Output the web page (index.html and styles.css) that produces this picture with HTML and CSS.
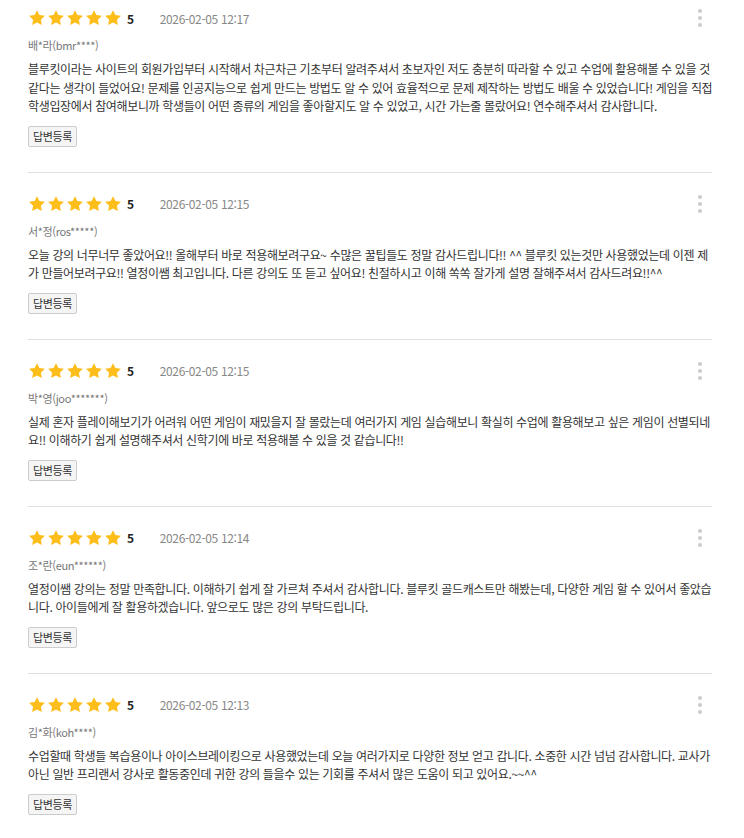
FILE: index.html
```html
<!DOCTYPE html>
<html lang="ko">
<head>
<meta charset="utf-8">
<link rel="stylesheet" href="styles.css">
</head>
<body>
<div class="list">
  <div class="review">
    <div class="head">
      <div class="stars">
        <svg viewBox="0 0 24 24"><path d="M12 1.5l3.2 6.6 7.3 1-5.3 5.1 1.3 7.2L12 17.9l-6.5 3.5 1.3-7.2-5.3-5.1 7.3-1z"/></svg>
        <svg viewBox="0 0 24 24"><path d="M12 1.5l3.2 6.6 7.3 1-5.3 5.1 1.3 7.2L12 17.9l-6.5 3.5 1.3-7.2-5.3-5.1 7.3-1z"/></svg>
        <svg viewBox="0 0 24 24"><path d="M12 1.5l3.2 6.6 7.3 1-5.3 5.1 1.3 7.2L12 17.9l-6.5 3.5 1.3-7.2-5.3-5.1 7.3-1z"/></svg>
        <svg viewBox="0 0 24 24"><path d="M12 1.5l3.2 6.6 7.3 1-5.3 5.1 1.3 7.2L12 17.9l-6.5 3.5 1.3-7.2-5.3-5.1 7.3-1z"/></svg>
        <svg viewBox="0 0 24 24"><path d="M12 1.5l3.2 6.6 7.3 1-5.3 5.1 1.3 7.2L12 17.9l-6.5 3.5 1.3-7.2-5.3-5.1 7.3-1z"/></svg>
      </div>
      <span class="score">5</span>
      <span class="date">2026-02-05 12:17</span>
      <span class="more"><i></i><i></i><i></i></span>
    </div>
    <div class="name">배*라(bmr****)</div>
    <p class="body">블루킷이라는 사이트의 회원가입부터 시작해서 차근차근 기초부터 알려주셔서 초보자인 저도 충분히 따라할 수 있고 수업에 활용해볼 수 있을 것 같다는 생각이 들었어요! 문제를 인공지능으로 쉽게 만드는 방법도 알 수 있어 효율적으로 문제 제작하는 방법도 배울 수 있었습니다! 게임을 직접 학생입장에서 참여해보니까 학생들이 어떤 종류의 게임을 좋아할지도 알 수 있었고, 시간 가는줄 몰랐어요! 연수해주셔서 감사합니다.</p>
    <button class="reply">답변등록</button>
  </div>

  <div class="review">
    <div class="head">
      <div class="stars">
        <svg viewBox="0 0 24 24"><path d="M12 1.5l3.2 6.6 7.3 1-5.3 5.1 1.3 7.2L12 17.9l-6.5 3.5 1.3-7.2-5.3-5.1 7.3-1z"/></svg>
        <svg viewBox="0 0 24 24"><path d="M12 1.5l3.2 6.6 7.3 1-5.3 5.1 1.3 7.2L12 17.9l-6.5 3.5 1.3-7.2-5.3-5.1 7.3-1z"/></svg>
        <svg viewBox="0 0 24 24"><path d="M12 1.5l3.2 6.6 7.3 1-5.3 5.1 1.3 7.2L12 17.9l-6.5 3.5 1.3-7.2-5.3-5.1 7.3-1z"/></svg>
        <svg viewBox="0 0 24 24"><path d="M12 1.5l3.2 6.6 7.3 1-5.3 5.1 1.3 7.2L12 17.9l-6.5 3.5 1.3-7.2-5.3-5.1 7.3-1z"/></svg>
        <svg viewBox="0 0 24 24"><path d="M12 1.5l3.2 6.6 7.3 1-5.3 5.1 1.3 7.2L12 17.9l-6.5 3.5 1.3-7.2-5.3-5.1 7.3-1z"/></svg>
      </div>
      <span class="score">5</span>
      <span class="date">2026-02-05 12:15</span>
      <span class="more"><i></i><i></i><i></i></span>
    </div>
    <div class="name">서*정(ros*****)</div>
    <p class="body">오늘 강의 너무너무 좋았어요!! 올해부터 바로 적용해보려구요~ 수많은 꿀팁들도 정말 감사드립니다!! ^^ 블루킷 있는것만 사용했었는데 이젠 제가 만들어보려구요!! 열정이쌤 최고입니다. 다른 강의도 또 듣고 싶어요! 친절하시고 이해 쏙쏙 잘가게 설명 잘해주셔서 감사드려요!!^^</p>
    <button class="reply">답변등록</button>
  </div>

  <div class="review">
    <div class="head">
      <div class="stars">
        <svg viewBox="0 0 24 24"><path d="M12 1.5l3.2 6.6 7.3 1-5.3 5.1 1.3 7.2L12 17.9l-6.5 3.5 1.3-7.2-5.3-5.1 7.3-1z"/></svg>
        <svg viewBox="0 0 24 24"><path d="M12 1.5l3.2 6.6 7.3 1-5.3 5.1 1.3 7.2L12 17.9l-6.5 3.5 1.3-7.2-5.3-5.1 7.3-1z"/></svg>
        <svg viewBox="0 0 24 24"><path d="M12 1.5l3.2 6.6 7.3 1-5.3 5.1 1.3 7.2L12 17.9l-6.5 3.5 1.3-7.2-5.3-5.1 7.3-1z"/></svg>
        <svg viewBox="0 0 24 24"><path d="M12 1.5l3.2 6.6 7.3 1-5.3 5.1 1.3 7.2L12 17.9l-6.5 3.5 1.3-7.2-5.3-5.1 7.3-1z"/></svg>
        <svg viewBox="0 0 24 24"><path d="M12 1.5l3.2 6.6 7.3 1-5.3 5.1 1.3 7.2L12 17.9l-6.5 3.5 1.3-7.2-5.3-5.1 7.3-1z"/></svg>
      </div>
      <span class="score">5</span>
      <span class="date">2026-02-05 12:15</span>
      <span class="more"><i></i><i></i><i></i></span>
    </div>
    <div class="name">박*영(joo*******)</div>
    <p class="body">실제 혼자 플레이해보기가 어려워 어떤 게임이 재밌을지 잘 몰랐는데 여러가지 게임 실습해보니 확실히 수업에 활용해보고 싶은 게임이 선별되네요!! 이해하기 쉽게 설명해주셔서 신학기에 바로 적용해볼 수 있을 것 같습니다!!</p>
    <button class="reply">답변등록</button>
  </div>

  <div class="review">
    <div class="head">
      <div class="stars">
        <svg viewBox="0 0 24 24"><path d="M12 1.5l3.2 6.6 7.3 1-5.3 5.1 1.3 7.2L12 17.9l-6.5 3.5 1.3-7.2-5.3-5.1 7.3-1z"/></svg>
        <svg viewBox="0 0 24 24"><path d="M12 1.5l3.2 6.6 7.3 1-5.3 5.1 1.3 7.2L12 17.9l-6.5 3.5 1.3-7.2-5.3-5.1 7.3-1z"/></svg>
        <svg viewBox="0 0 24 24"><path d="M12 1.5l3.2 6.6 7.3 1-5.3 5.1 1.3 7.2L12 17.9l-6.5 3.5 1.3-7.2-5.3-5.1 7.3-1z"/></svg>
        <svg viewBox="0 0 24 24"><path d="M12 1.5l3.2 6.6 7.3 1-5.3 5.1 1.3 7.2L12 17.9l-6.5 3.5 1.3-7.2-5.3-5.1 7.3-1z"/></svg>
        <svg viewBox="0 0 24 24"><path d="M12 1.5l3.2 6.6 7.3 1-5.3 5.1 1.3 7.2L12 17.9l-6.5 3.5 1.3-7.2-5.3-5.1 7.3-1z"/></svg>
      </div>
      <span class="score">5</span>
      <span class="date">2026-02-05 12:14</span>
      <span class="more"><i></i><i></i><i></i></span>
    </div>
    <div class="name">조*란(eun******)</div>
    <p class="body">열정이쌤 강의는 정말 만족합니다. 이해하기 쉽게 잘 가르쳐 주셔서 감사합니다. 블루킷 골드캐스트만 해봤는데, 다양한 게임 할 수 있어서 좋았습니다. 아이들에게 잘 활용하겠습니다. 앞으로도 많은 강의 부탁드립니다.</p>
    <button class="reply">답변등록</button>
  </div>

  <div class="review">
    <div class="head">
      <div class="stars">
        <svg viewBox="0 0 24 24"><path d="M12 1.5l3.2 6.6 7.3 1-5.3 5.1 1.3 7.2L12 17.9l-6.5 3.5 1.3-7.2-5.3-5.1 7.3-1z"/></svg>
        <svg viewBox="0 0 24 24"><path d="M12 1.5l3.2 6.6 7.3 1-5.3 5.1 1.3 7.2L12 17.9l-6.5 3.5 1.3-7.2-5.3-5.1 7.3-1z"/></svg>
        <svg viewBox="0 0 24 24"><path d="M12 1.5l3.2 6.6 7.3 1-5.3 5.1 1.3 7.2L12 17.9l-6.5 3.5 1.3-7.2-5.3-5.1 7.3-1z"/></svg>
        <svg viewBox="0 0 24 24"><path d="M12 1.5l3.2 6.6 7.3 1-5.3 5.1 1.3 7.2L12 17.9l-6.5 3.5 1.3-7.2-5.3-5.1 7.3-1z"/></svg>
        <svg viewBox="0 0 24 24"><path d="M12 1.5l3.2 6.6 7.3 1-5.3 5.1 1.3 7.2L12 17.9l-6.5 3.5 1.3-7.2-5.3-5.1 7.3-1z"/></svg>
      </div>
      <span class="score">5</span>
      <span class="date">2026-02-05 12:13</span>
      <span class="more"><i></i><i></i><i></i></span>
    </div>
    <div class="name">김*화(koh****)</div>
    <p class="body">수업할때 학생들 복습용이나 아이스브레이킹으로 사용했었는데 오늘 여러가지로 다양한 정보 얻고 갑니다. 소중한 시간 넘넘 감사합니다. 교사가 아닌 일반 프리랜서 강사로 활동중인데 귀한 강의 들을수 있는 기회를 주셔서 많은 도움이 되고 있어요.~~^^</p>
    <button class="reply">답변등록</button>
  </div>
</div>
</body>
</html>
```

FILE: styles.css
```css
* { box-sizing: border-box; }
html, body { margin: 0; padding: 0; background: #fff; }
body {
  font-family: "Noto Sans CJK KR", "Noto Sans", sans-serif;
  color: #333;
  font-size: 12px;
  letter-spacing: -0.35px;
}
.list {
  width: 712px;
  padding-left: 28px;
  padding-top: 8px;
}
.review {
  border-bottom: 1px solid #e0e0e0;
  padding-bottom: 25px;
  margin-bottom: 21px;
}
.head {
  display: flex;
  align-items: center;
  height: 20px;
}
.stars {
  display: flex;
  gap: 1px;
}
.stars svg {
  width: 18px;
  height: 18px;
  fill: #fdbe1b;
}
.score {
  font-weight: 700;
  color: #222;
  margin-left: 5px;
  font-size: 12px;
}
.date {
  margin-left: 26px;
  color: #888;
  font-size: 12px;
}
.more {
  margin-left: auto;
  margin-right: 10px;
  display: flex;
  flex-direction: column;
  gap: 3px;
}
.more i {
  display: block;
  width: 4px;
  height: 4px;
  border-radius: 50%;
  background: #ccc;
}
.name {
  margin-top: 8px;
  color: #777;
  font-size: 11px;
  line-height: 18px;
}
.body {
  margin: 6px -3px 0 0;
  line-height: 18.5px;
  font-size: 12px;
  color: #333;
}
.reply {
  margin-top: 10px;
  font-family: inherit;
  font-size: 11px;
  letter-spacing: -0.35px;
  color: #333;
  background: #f5f5f5;
  border: 1px solid #ccc;
  border-radius: 2px;
  padding: 0 4px;
  height: 21px;
  line-height: 19px;
}
```
